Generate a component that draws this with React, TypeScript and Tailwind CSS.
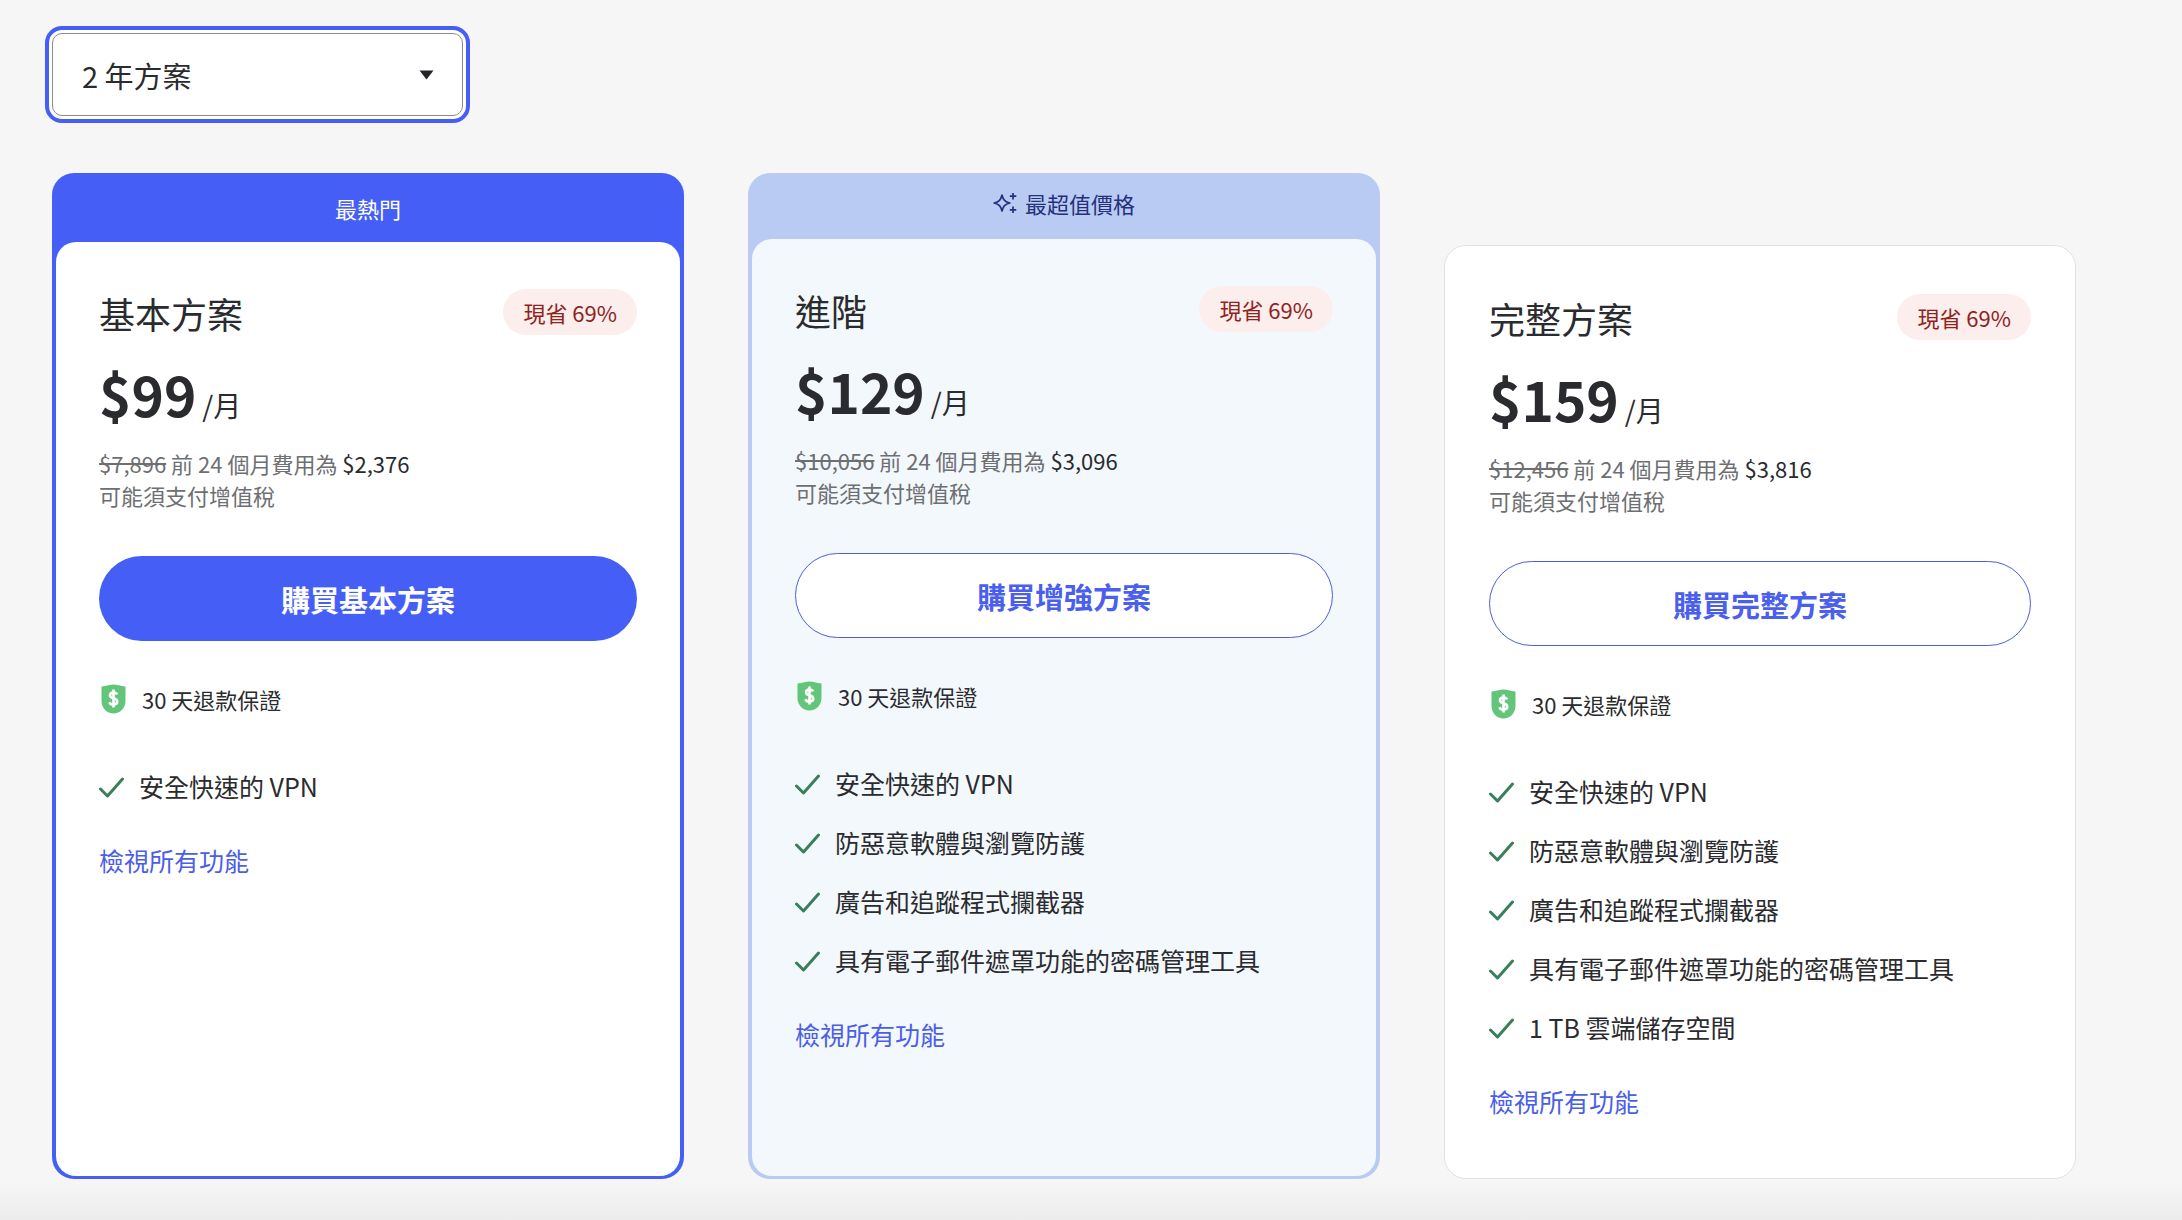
import { useState } from "react";
import type { ReactNode } from "react";

interface Plan {
  name: string;
  price: string;
  oldTotal: string;
  total: string;
  cta: string;
  features: string[];
  variant: "popular" | "value" | "plain";
}

const plans: Plan[] = [
  {
    name: "基本方案",
    price: "$99",
    oldTotal: "$7,896",
    total: "$2,376",
    cta: "購買基本方案",
    features: ["安全快速的 VPN"],
    variant: "popular",
  },
  {
    name: "進階",
    price: "$129",
    oldTotal: "$10,056",
    total: "$3,096",
    cta: "購買增強方案",
    features: [
      "安全快速的 VPN",
      "防惡意軟體與瀏覽防護",
      "廣告和追蹤程式攔截器",
      "具有電子郵件遮罩功能的密碼管理工具",
    ],
    variant: "value",
  },
  {
    name: "完整方案",
    price: "$159",
    oldTotal: "$12,456",
    total: "$3,816",
    cta: "購買完整方案",
    features: [
      "安全快速的 VPN",
      "防惡意軟體與瀏覽防護",
      "廣告和追蹤程式攔截器",
      "具有電子郵件遮罩功能的密碼管理工具",
      "1 TB 雲端儲存空間",
    ],
    variant: "plain",
  },
];

function SparkleIcon() {
  return (
    <svg width="24" height="24" viewBox="0 0 24 24" fill="none" stroke="currentColor" strokeWidth="1.7" aria-hidden="true">
      <path d="M9 4C10.2 8.8 11.9 10.7 16.8 12C11.9 13.3 10.2 15.2 9 20C7.8 15.2 6.1 13.3 1.2 12C6.1 10.7 7.8 8.8 9 4Z" strokeLinejoin="round" />
      <path d="M20 2v6.5M16.8 5.2h6.5M20 15.5V22M16.8 18.8h6.5" />
    </svg>
  );
}

function ShieldIcon() {
  return (
    <svg className="shrink-0" width="25" height="30" viewBox="0 0 25 30" aria-hidden="true">
      <path d="M12.5 0.5C16 0.5 19 2 24.5 2.6V17C24.5 24 19 29.5 12.5 29.5S0.5 24 0.5 17V2.6C6 2 9 0.5 12.5 0.5Z" fill="#63c579" />
      <path d="M16 10.6C15.4 9.2 14.1 8.6 12.4 8.6C10.3 8.6 9 9.7 9 11.4C9 15.2 16.2 13.2 16.2 17.6C16.2 19.5 14.7 20.6 12.5 20.6C10.4 20.6 9.1 19.9 8.5 18.2M12.5 5.6V23.6" fill="none" stroke="#fff" strokeWidth="2.6" />
    </svg>
  );
}

function CheckIcon() {
  return (
    <svg className="shrink-0" width="26" height="24" viewBox="0 0 26 24" fill="none" aria-hidden="true">
      <path d="M1.5 15L8.5 22L23.5 5" stroke="#3a7f5c" strokeWidth="3" strokeLinecap="round" strokeLinejoin="round" />
    </svg>
  );
}

function CardFrame({ variant, children }: { variant: Plan["variant"]; children: ReactNode }) {
  if (variant === "popular") {
    return (
      <article className="flex flex-col rounded-[22px] bg-[#455ff6] px-1 pb-[3px]">
        <div className="flex h-[69px] items-center justify-center text-[22px] leading-8 text-white">
          最熱門
        </div>
        <div className="grow rounded-[20px] bg-white px-[43px] pt-[47px] pb-14">{children}</div>
      </article>
    );
  }

  if (variant === "value") {
    return (
      <article className="flex flex-col rounded-[22px] bg-[#b9cbf3] px-1 pb-[3px]">
        <div className="flex h-[66px] items-center justify-center gap-2 pb-1.5 text-[22px] leading-8 text-[#25307c]">
          <SparkleIcon />
          最超值價格
        </div>
        <div className="grow rounded-[20px] bg-[#f3f8fc] px-[43px] pt-[47px] pb-14">{children}</div>
      </article>
    );
  }

  return (
    <article className="mt-18 rounded-[22px] border border-[#e2e2e4] bg-white px-11 pt-12 pb-[59px]">
      {children}
    </article>
  );
}

function PlanCard({ plan }: { plan: Plan }) {
  return (
    <CardFrame variant={plan.variant}>
      <div className="flex items-start justify-between">
        <h2 className="text-4xl leading-[48px]">{plan.name}</h2>
        <span className="rounded-full bg-[#fbeeed] px-5 py-[7px] text-[22px] leading-8 text-[#8f231c]">
          現省 69%
        </span>
      </div>

      <p className="mt-5 flex items-baseline gap-1.5">
        <span className="text-[55px] leading-[72px] font-bold">{plan.price}</span>
        <span className="text-[28px] leading-9">/月</span>
      </p>

      <div className="mt-[18px] text-[22px] leading-8 text-[#6e6f73]">
        <p>
          <s>{plan.oldTotal}</s> 前 24 個月費用為 <span className="text-[#2a2b2e]">{plan.total}</span>
        </p>
        <p>可能須支付增值稅</p>
      </div>

      <button
        type="button"
        className={
          plan.variant === "popular"
            ? "mt-[45px] h-[85px] w-full rounded-full bg-[#455ff6] pt-0.5 text-[29px] font-bold text-white"
            : "mt-[45px] h-[85px] w-full rounded-full border border-[#4a5fe0] bg-white pt-0.5 text-[29px] font-bold text-[#4a60ec]"
        }
      >
        {plan.cta}
      </button>

      <p className="mt-[42px] flex items-center gap-4 pl-0.5 text-[22px] leading-8">
        <ShieldIcon />
        30 天退款保證
      </p>

      <ul className="mt-[53px] flex flex-col gap-[23px] text-[25px] leading-9">
        {plan.features.map((feature) => (
          <li key={feature} className="flex items-center gap-3.5">
            <CheckIcon />
            {feature}
          </li>
        ))}
      </ul>

      <a href="#features" className="mt-[38px] block w-fit text-[25px] leading-9 text-[#4a5eea]">
        檢視所有功能
      </a>
    </CardFrame>
  );
}

export default function App() {
  const [term, setTerm] = useState("2");

  return (
    <main className="min-h-screen bg-[#f6f6f6] bg-[linear-gradient(to_top,#ececec,#f6f6f6_40px)] pt-[33px] pr-[106px] pb-10 pl-[52px] font-['Noto_Sans_CJK_TC',sans-serif] text-[#2a2b2e]">
      <div className="relative w-[411px]">
        <select
          aria-label="方案期間"
          value={term}
          onChange={(e) => setTerm(e.target.value)}
          className="block h-[83px] w-full appearance-none rounded-[10px] border border-[#8b8c91] bg-white pt-0.5 pr-16 pl-[29px] text-[29px] ring-3 ring-white outline-4 outline-offset-3 outline-[#455ff6]"
        >
          <option value="2">2 年方案</option>
          <option value="1">1 年方案</option>
        </select>
        <svg className="pointer-events-none absolute top-[37px] right-7" width="16" height="10" viewBox="0 0 16 10" aria-hidden="true">
          <path d="M0.5 0.5H14.5L7.5 9.5Z" fill="#232427" />
        </svg>
      </div>

      <section className="mt-[57px] grid grid-cols-3 gap-16">
        {plans.map((plan) => (
          <PlanCard key={plan.name} plan={plan} />
        ))}
      </section>
    </main>
  );
}
